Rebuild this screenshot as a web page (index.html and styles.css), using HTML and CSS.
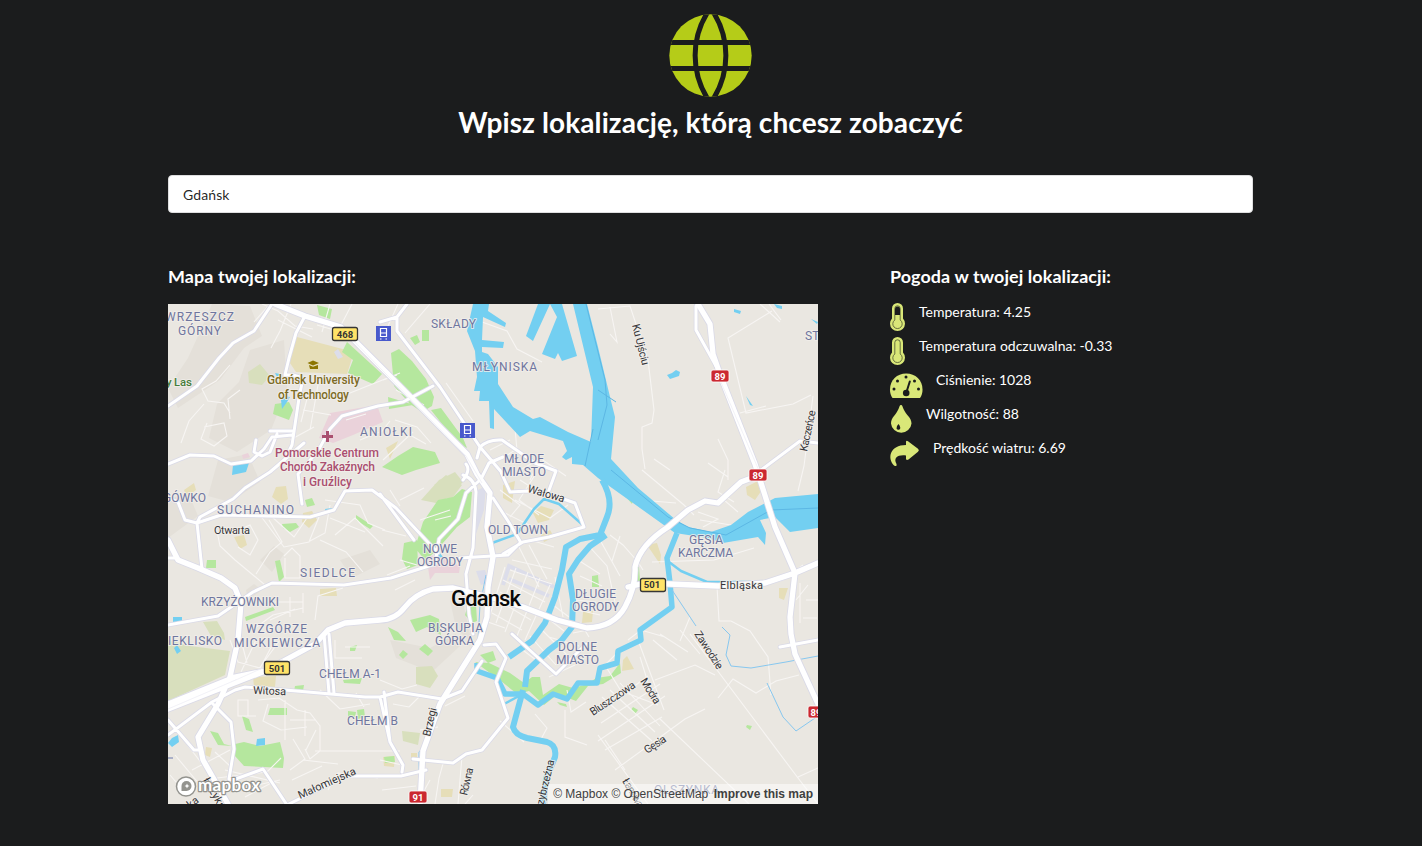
FILE: index.html
```html
<!DOCTYPE html>
<html lang="pl">
<head>
<meta charset="utf-8">
<title>Mapa i pogoda</title>
<link rel="stylesheet" href="styles.css">
</head>
<body>
<main class="page">
  <header class="header">
    <svg class="globe" viewBox="0 0 83 83">
      <defs><clipPath id="disc"><circle cx="41.5" cy="41.5" r="41.200"/></clipPath></defs>
      <g clip-path="url(#disc)">
        <rect width="83" height="83" class="globe-fill"/>
        <path class="globe-line" d="M40 -4C21.500 24 21.500 59 40 87M43 -4C61.500 24 61.500 59 43 87M0 28.500H83M0 54.500H83"/>
      </g>
    </svg>
    <h1>Wpisz lokalizację, którą chcesz zobaczyć</h1>
  </header>
  <input class="search" type="text" value="Gdańsk" aria-label="Lokalizacja">
  <div class="columns">
    <section class="map-column">
      <h3>Mapa twojej lokalizacji:</h3>
      <div class="map">
        <svg class="map-canvas" viewBox="168 304 650 500">
          <defs>
            <path id="mid-roads" d="M168 406l29-20 22-28 14-15 21-12 18-27M305 316l-9 17-7 25-4 17 8 0 10 3-4 20-7 47-9 18M168 464l22-9 24 1 17 8 20-3 13-12 8-12 20-2M256 440l-2 12 8 4 8-4 7-18M270 431l23 0M168 498l10 4 7 18 12 3 3-6 33-18 12-11 25-16 34-29M197 523l24-8 89 2 24-7 11-19 27-1 24 18 42 45M302 504l-4-30 20-23 12-22 12-13 36-10 25-4 30-16M197 523l5 46M168 625l50-9 35-24 19-9 72 2 47-7 44-14 4-25 19-20 8-26 15-14 8-16 14-6M463 475q12 4 13 17l-3 56-7 26 3 40 4 20M407 304l-10 13 0 14 43 56 40 60 23 27M463 480q8-10 3-16M477 458l3-11q8-8 22-7l33 23 21 8-8 22M500 470l10 22 18-1 18 2 29 10 9 24-35 10-26 5-20 12M380 494l34 46M493 498l15 23 12 20M460 558l48-3M508 555l12-12M484 645l12-1 10 14-10 24 12 36-26 32-16 4-13 9-40-4M512 634l44 40 30-30M168 735l44-33 23-12 10-3 40 3 80 7 15 0 18-5 44 7 20-8 20-30M168 720l26 30 4 0M213 704l18 18 3 27-5 30 4 1 30-11 24 36 58-29 56 0 25-6M380 697l10 45 13 23-1 7M324 634l5 59M329 634l5 59M384 692l6 50M757 473l43-32 18 2M380 322l17-5M696 306l0 24 25 45M780 647l38-7M168 558h10"/>
            <path id="major-roads" d="M168 540L178 560 198 568 221 578 235 588 241 603 238 640 230 677 218 704 198 737 203 760 228 804M275 304L305 316 341 327 388 374 467 454 477 474 490 493 487 527 493 557 488 587 487 617 480 640 463 667 440 704 423 751 420 804M168 709L265 671 315 644 328 630 345 623 380 620Q395 620 405 607T433 589L453 588 493 598 523 607 557 620 587 628Q614 627 625 607T635 567Q640 545 668 527L688 510 705 501 718 503 741 482 757 476M628 587L645 583 718 586 765 583 795 573 818 563M698 304L710 324 713 354 721 377 755 464 775 527 795 573 790 617 791 634 795 654 818 704M168 704L235 677 265 671"/>
          </defs>
          <g class="urban">
            <path d="M212 304l38 2 12 30-18 12-24 32-42 28-10-20 20-30 10-22zM250 350l34-10 3 50-16 40-34 22-28-14 8-34 22-22zM218 460l30-6 12 28-30 20-22-6zM168 500l20-8 10 24-30 22zM260 560l14-14 10 8-12 18zM390 640l40 8 26-14 4 12-28 26-36-14zM246 590l8-6 8 6-14 10zM340 560l30-10 10 14-28 14zM450 600l14 6 8 38-16-16z"/>
          </g>
          <g class="forest">
            <path d="M168 640l22 6 40 5-5 24-57 26zM248 372l12-8 10 12-8 9-13-2zM203 622l14-1 7 12 1 7-14-4zM416 667l16-1 6 10-8 12-14-4zM402 731l18 2-2 12-15-4zM421 500l18-20 16-8 8 10-22 22zM434 485l12-10 16 10-12 16z"/>
          </g>
          <g class="sand">
            <path d="M297 337l57 15-7 22-51-2-8-12zM386 448l12-7-8 18zM746 487l14-7 4 7-9 13-8-5zM647 545l10-2 4 12-1 9zM779 588l9 0-4 12-5-2zM583 612l10-1-1 11-10 1zM533 513l8-7 13 4-5 10-11 3zM503 485l12-4-3 22-9-5zM623 660l4-4 7 13-12 2zM303 513l9-2 5 9-8 8-7-6zM276 487l10-1 2 13-7 5-9-7zM253 677l23-1-1 11-21 0zM320 589l16-1 1 8-17 0zM383 757l12-1-1 11-10-1zM441 789l12 0-1 8-11 0zM184 490l10-7 2 7-9 7zM411 753l6 0 0 8-6 0zM234 537l10-2 3 10-7 4zM206 747l6 1-2 9-5-2zM541 535l9-5 4 7-10 5z"/>
          </g>
          <g class="hospital">
            <path d="M330 413l47-8 6 17-30 13-20 8-14-5zM426 555l14 2 20 9-1 7-24 0-5 7zM242 455l6-2 2 4-7 2z"/>
          </g>
          <g class="park">
            <path d="M347 342l35 32-9 10-25-11 5-13-11-8zM317 305l15 4-2 10-11-4zM275 404l14-2 4 8-4 10-16-6zM391 353l8-4 13 12 14 18 8 18-2 9-10 6-12-8-16-18zM388 397l20 6 5 2-24 4zM431 410l10-2 22 30 4 10-10-5zM410 338l7-3 3 7-5 3zM422 330h7v11h-7zM398 456l15-9 22 5 5 11-24 7-14 5-20-8zM462 489l10 3-2 25-13 10-22 25-10 8-10-12 8-26 15-22 15-3zM404 543l13-3 1 25-11 4-5-10zM475 662l14 1 21 10 14 10 8-6 8 0 3 18 16-11 14 4 15-4 8-6 14-2 10-13 1 10-18 11-15 2-12 15-18-7-14 11-15-14-12 3-16-13zM235 744l9-2 16 4 20-4 4 16-1 10-39-2-9-10zM242 716l7 3 4 13-7-2zM210 731l8 2 6 11 8 2-14-1zM270 708h17v7h-19zM357 710l7-1 1 8-7 2zM207 560h9v8h-10zM275 561l5-1 4 17-5 5zM282 524l14-1 3 4-9 5-7-4zM245 617l28-10 2 3-29 11zM634 569l5-2 1 14-5 5zM592 576l6-1 1 12-7 0zM627 493l7 2-2 9-6-7zM356 515l17 11-3 3-14-9zM305 500l7-2 3 7-8 2zM295 686l9-1-1 6-9 0zM467 608l9-3 1 16-5 2-7-8zM410 620l20-5 9 4 2 16-14-8-11 5zM388 627l10 5 8 9-12-1zM343 680l19-2-2 6-16-1zM419 649l6-5 8 7-5 5zM403 650l5 4-5 5-4-4zM633 707l5 3-3 4-4-4zM747 725l5 1-2 4-4-3zM384 757l10-1 1 6-10 1zM480 655l13-4 3 9-8 3zM557 702l9 2 1 3-7-2zM348 711l8 1-1 5-7 0zM350 647l7-2-2 6-5 0z"/>
          </g>
          <g class="rail-area"><path d="M478 490l8-4-2 24-8 24zM476 571l9-1 4 12-8 3zM334 352l4-3 5 8-5 2z"/><path class="campus" d="M503 585l6-19 45 21M509 579l40 17"/></g>
          <g class="streets">
            <path d="M270 304l-16 18M262 304l16 7 17 15 18 3M278 320l34 17M291 304l-11 27-9 17M317 325l34 10M330 304l-8 28M352 304l-12 23M230 365l-14 16-14 8 6 12 16 2 6 10M240 390l-12 9 2 20M204 427l20-4 3 13-13 10-13-7 6-16M181 443l8-22 15-17M308 395l-7 27M318 385l-8 45M303 410l28 5M340 397l30-12 30-12M396 390l28 15M346 420l20-6M360 440l22-9 8-10M383 460l30-28M395 420l22 7 14 16M410 435l16 9M290 440l24-13M330 505l-5 28-15 8M230 534l20-9 8 15-8 15-12-8M216 526l4 20 15 14M269 520l13 22-12 10-14 22M260 515l24 32 25-5 10-25M270 515l24 22 15-22M284 556l8-8 8 8v22h-15v-20M235 560l30 25 20-2M320 540l26 12 17 20M335 535l20-17 28 28M330 518l35 14M325 500l35 5 8 18 17 7M270 620l25-11M255 628l18-13 30-7M290 617v-20M303 613v-20M275 602h28M315 620l3-24 25-8M230 640l8 22 36 10M240 636l7 27M256 640l-15 32M275 640l-16 30M280 640l-22 30M248 716v-16h-10v16h18M258 700l21-2 18 12 13 3 10 13v25l-10 8-5-10M268 704l-5 17 18 9 26-3M285 700v40M305 710v26M290 720h26M316 730l-10 20M315 751h85M175 755l25 30M186 743l27 35M170 775l17 20M192 770l38-20M215 752l15 14M217 778l50-6 14-14M225 770l55 13M235 790l45-10M245 797l30-16M290 770l15-11-12-20M303 760l35 4M292 780l30-14M328 790l10-17 40 5M335 640v18h27M345 647h25M320 690l20 19 30-5M356 693l8 14M380 680l22 9 15-4M393 704l16 3 10-10"/>
            <path d="M383 380l14-5M398 304l-10 22-8 13M430 304l-25 29M482 322l25 9 10 18 25 13M446 383l27 38M515 428l2 23M490 450l20-10M500 460l15-10M520 470l18-10M530 480l10-22 26 18M400 500l24-12M390 490l10 16M420 520l30-10M382 530l24 6M387 575l23-9M395 590l20-10M400 560l17 5M435 520l16-4M500 490l20 15-10 12M520 480l28 18M535 475l-16 25 20 15M515 500l35 18 18-13M505 513l30 15M530 540l24 7M519 547l20 40M529 545l18 34M512 560l40 9M510 570l42 14M503 580l42 22M500 592l37 22M497 600l34 20M492 613l30 17M485 621l20 7M505 567l-15 48M516 568l-20 55M528 572l-23 60M540 578l-23 58M550 585l-25 55M578 560l22 14M580 576l22 10M587 544l20 22 8 36M576 600l20 2M578 610l22 5M573 633l25-5M580 622l9 15M555 577l8 40M553 605l16 12M550 620l14 11M520 648l20 15M530 636l26 29M540 628l28 28M549 637l30 9M549 677l26-12M567 690l4 22 15-10M620 650l-15 15 16 26 37 14M602 697l50 44M610 690l45 42M620 683l40 43M595 715l53-39M601 723l59-39M598 741l67-45M605 750l57-33M615 770l70-51 20-10M638 640l26 70M659 718l90 86M605 740l20 30M598 735l50 69M500 721l24 21M535 714l12 14-7 13M565 710v27l22 8"/>
            <path d="M598 309l32-3 18 54 6 50-2 13-10 4v22l3 20M610 307l7 35-7-8M769 304l12 16M772 311l-44 27 18 75 47-9 18-9M740 413l26-7M813 396l-9 70-6 25M760 304l20 18M642 470l42 35 10 10M640 500l36 3M725 470l-7 22 16 10M698 512l20 7-15 8M700 520l31 5M724 500l14 12M610 535l13 10 15 17 5 8M652 562l62-2 40-12M600 540l20 36M620 536l-8 25M717 586l2 35h12l19 10 18 26 3 38M800 583v40M806 600h12M803 618h14M718 698l15-19 23 14 20-12 23-6M680 630l20 24M653 640l24 20M640 657l14 45M655 680l40-15 20 10M690 617l-10 24M660 634l28 18M628 640l13-10 24 7M748 590l35-10 20-15M718 439l10 21v20M708 463l20 14M670 470l-16-11M808 585l-12 15M690 634l108 144 20 26M798 777l20-9M445 706l20-10M420 730l18-3M430 780l-11 20M444 760l-5 18-4 26M473 795l-8 9M462 756l-4 48M380 760l22 5M382 790l34-4"/>
          </g>
          <g class="water">
            <path d="M473 304L467 331 475 351 477 377 474 391 480 391 479 401 489 401 490 428 494 429 494 409 520 437 530 431 563 441 567 451 562 457 566 460 572 457 572 464 583 465 598 478 675 533 708 538 723 543 758 537 765 545 766 533 760 520 775 517 790 532 818 528V494L775 498 748 512 731 525 711 532 688 527 676 520 638 488 611 459 615 417 611 401 598 347 587 304H573L593 387 591 442 568 432 540 417 533 419 513 407 498 384 498 367 488 354 482 352V347L503 348 504 342 482 340 483 317 505 327 506 323 488 311 489 304ZM538 304L526 336 533 341 550 304 557 317 542 354 555 359 558 353 562 361 577 356 562 304ZM667 375l5-2 4-3 4 2-1 4-9 3zM734 309l7 2-1 3-6-2zM774 304l8 2 0 3-5-1zM811 319l7 3-1 2zM746 396l7 10-3-1zM281 400l4-4 5 1-3 5-5 7zM233 465l16-2-3 9-14 3zM173 617h9v6h-9zM174 648l3-3 4 6-4 3zM172 738l6-3 1 7-7 5-4-4zM257 739l8-1v7l-9 1zM275 373l5 1-3 3zM325 509l7-1 1 3-7 1zM439 552l4 5-5 1z"/>
            <path class="channel" stroke-width="6" d="M602 480Q614 500 607 517L600 535 580 539 566 547 562 570 555 597 545 623 532 641 509 657"/>
            <path class="channel" stroke-width="6" d="M606 535L590 546 578 560 569 574 573 600 572 627 561 641 549 650 527 671 525 687"/>
            <path class="channel" stroke-width="5.5" d="M677 533L667 558 670 583 672 607 640 630 641 640 618 651 617 663 600 668 597 683 578 683 567 699 553 694 538 705 523 694 505 694 497 678 477 671V663"/>
            <path class="channel" stroke-width="6" d="M523 690L513 727Q515 735 527 738L547 742Q557 745 555 757L546 779 543 804"/>
            <path class="channel" stroke-width="2.500" d="M669 562l12 9 26 11M492 543l25-9 17-25 10-10 15 5 25 22M504 704l15-8M707 582l50 0"/>
            <path class="creek" d="M672 590l24 36M722 627l8 8-4 20 5 11 20 2 35-6 32-6M767 683l16 34 13 14 22-15M419 770v-18l6-7M486 575l-6 30-2 35"/>
          </g>
          <path class="water-edge" d="M598 440l9-35-2-25-19-76M598 390l18 12M611 470l57 47 22 11 36 7 45-25 47-2M585 466l8-37"/>
          <g class="roads">
            <use href="#mid-roads" class="mid casing"/><use href="#major-roads" class="major casing"/>
            <use href="#mid-roads" class="mid fill"/><use href="#major-roads" class="major fill"/>
          </g>
          <path class="road-divider" d="M168 709l70-30 45-20M343 330l123 126 16 27M720 380l43 100"/>
          <g class="area-label">
            <text x="165" y="321" textLength="69">WRZESZCZ</text><text x="178" y="335" textLength="43">GÓRNY</text>
            <text x="431" y="328" textLength="45">SKŁADY</text><text x="472" y="371" textLength="65">MŁYNISKA</text>
            <text x="360" y="436" textLength="52">ANIOŁKI</text><text x="504" y="463" textLength="40">MŁODE</text><text x="502" y="476" textLength="44">MIASTO</text>
            <text x="805" y="340">ST</text><text x="163" y="502" textLength="43">GÓWKO</text><text x="217" y="514" textLength="77">SUCHANINO</text>
            <text x="300" y="577" textLength="55">SIEDLCE</text><text x="201" y="606" textLength="78">KRZYŻOWNIKI</text><text x="246" y="633" textLength="61">WZGÓRZE</text><text x="234" y="647" textLength="86">MICKIEWICZA</text>
            <text x="168" y="645" textLength="54">IEKLISKO</text><text x="488" y="534" textLength="60">OLD TOWN</text><text x="423" y="553" textLength="34">NOWE</text><text x="417" y="566" textLength="46">OGRODY</text>
            <text x="689" y="544" textLength="34">GĘSIA</text><text x="678" y="557" textLength="55">KARCZMA</text><text x="575" y="598" textLength="41">DŁUGIE</text><text x="572" y="611" textLength="47">OGRODY</text>
            <text x="428" y="632" textLength="55">BISKUPIA</text><text x="435" y="645" textLength="39">GÓRKA</text><text x="558" y="651" textLength="39">DOLNE</text><text x="556" y="664" textLength="43">MIASTO</text>
            <text x="319" y="678" textLength="62">CHEŁM A-1</text><text x="347" y="725" textLength="51">CHEŁM B</text><text x="654" y="794" textLength="65">OLSZYNKA</text>
          </g>
          <g class="street-label">
            <text x="214" y="534" textLength="36">Otwarta</text><text transform="translate(527 492) rotate(16)" textLength="38">Wałowa</text>
            <text transform="translate(632 325) rotate(76)" textLength="42">Ku Ujściu</text><text transform="translate(807 452) rotate(-78)" textLength="42">Kaczeńce</text>
            <text x="720" y="589" textLength="43">Elbląska</text><text transform="translate(694 634) rotate(57)" textLength="43">Zawodzie</text>
            <text transform="translate(593 716) rotate(-34)" textLength="52">Bluszczowa</text><text transform="translate(640 681) rotate(58)" textLength="28">Modra</text>
            <text transform="translate(647 754) rotate(-33)" textLength="24">Gęsia</text><text transform="translate(622 781) rotate(60)" textLength="32">Łanowa</text>
            <text transform="translate(253 694) rotate(2)" textLength="33">Witosa</text><text transform="translate(430 737) rotate(-77)" textLength="29">Brzegi</text>
            <text transform="translate(467 796) rotate(-77)" textLength="28">Równa</text><text transform="translate(300 799) rotate(-24)" textLength="62">Małomiejska</text>
            <text transform="translate(541 815) rotate(-76)" textLength="56">Przybrzeźna</text><text transform="translate(203 780) rotate(61)" textLength="34">Łużyka</text><text transform="translate(186 812) rotate(-37)">zka</text>
          </g>
          <g class="uni"><text x="267" y="384" textLength="93">Gdańsk University</text><text x="278" y="399" textLength="71">of Technology</text><path d="M307.500 363l5.500-2.500 6 2.500-6 2.500zM309 365l4 1.800 5-1.800v4h-8z"/></g>
          <g class="clinic"><text x="275" y="457" textLength="104">Pomorskie Centrum</text><text x="280" y="471" textLength="95">Chorób Zakaźnych</text><text x="303" y="486" textLength="49">i Gruźlicy</text><path d="M326 431h3v4h4v3h-4v4h-3v-4h-4v-3h4z"/></g>
          <text class="wood" x="166" y="386" textLength="26">y Las</text>
          <text class="city" x="451" y="606" textLength="70">Gdansk</text>
          <g class="yellow-shield">
            <rect x="332.5" y="327.5" width="25" height="13" rx="2"/><text x="345" y="338">468</text>
            <rect x="640.5" y="578.5" width="25" height="13" rx="2"/><text x="652" y="588">501</text>
            <rect x="264.5" y="661.5" width="25" height="13" rx="2"/><text x="277" y="672">501</text>
          </g>
          <g class="red-shield">
            <rect x="711" y="370" width="18" height="12" rx="2"/><text x="720" y="380">89</text>
            <rect x="749" y="469" width="18" height="12" rx="2"/><text x="758" y="479">89</text>
            <rect x="808" y="706" width="18" height="12" rx="2"/><text x="816" y="716">89</text>
            <rect x="409" y="791" width="18" height="12" rx="2"/><text x="418" y="801">91</text>
          </g>
          <g id="station"><path class="station-bg" d="M376 326h15v15h-15z"/><path class="station-mark" d="M380.500 328.500h6v8h-6zM380.500 333h6M380 339h1.500M385.500 339h1.500"/></g>
          <use href="#station" x="84" y="97"/>
          <path class="creek-dark" d="M168 758h5"/>
          <g class="logo">
            <circle cx="186" cy="786.5" r="9.500"/><path d="M181.500 791v-5a5 5 0 1 1 5 5z"/><path class="star" d="M187 783.500l.8 1.700 1.700.8-1.700.8-.8 1.700-.8-1.700-1.700-.8 1.700-.8z"/>
            <text x="198" y="791" textLength="62">mapbox</text>
          </g>
        </svg>
        <div class="attribution"><span>© Mapbox</span> <span class="osm">© OpenStreetMap</span> <b>Improve this map</b></div>
      </div>
    </section>
    <section class="weather">
      <h3>Pogoda w twojej lokalizacji:</h3>
      <ul>
        <li><svg width="15" height="29" viewBox="0 0 15 29"><path d="M2 5.500a5.500 5.500 0 0 1 11 0V15.500a7.500 7.500 0 1 1-11 0z"/><path class="cut-line" d="M4.800 17V5.500a2.700 2.700 0 0 1 5.400 0V17a4.700 4.700 0 1 1-5.400 0z"/><path class="cut" d="M5 12V6a2.500 2.500 0 0 1 5 0v6z"/></svg><span>Temperatura: 4.25</span></li>
        <li><svg width="15" height="29" viewBox="0 0 15 29"><path d="M2 5.500a5.500 5.500 0 0 1 11 0V15.500a7.500 7.500 0 1 1-11 0z"/><path class="cut-line" d="M4.800 17V5.500a2.700 2.700 0 0 1 5.400 0V17a4.700 4.700 0 1 1-5.400 0z"/></svg><span>Temperatura odczuwalna: -0.33</span></li>
        <li><svg width="32" height="29" viewBox="0 0 32 29"><path d="M2.500 27Q0 24 0 18.500C0 9 7 2.500 16.200 2.500S32.500 9 32.500 18.500Q32.500 24 30 27z"/><g class="cut"><circle cx="16" cy="6" r="1.500"/><circle cx="7.500" cy="10" r="1.500"/><circle cx="24.500" cy="10" r="1.500"/><circle cx="4" cy="18" r="1.500"/><circle cx="28.500" cy="18" r="1.500"/><circle cx="16.200" cy="22" r="3.300"/></g><path class="pointer" d="M16.500 21L19.800 10.500"/></svg><span>Ciśnienie: 1028</span></li>
        <li><svg width="22" height="29" viewBox="0 0 22 29"><path d="M11 0C12.500 0 12.500 2 13.500 4C16 10 21.500 12.500 21.500 18.500A10.300 10.200 0 0 1 1 18.500C1 12.500 6 10 8.500 4C9.500 2 9.500 0 11 0z"/><path class="cut" d="M8.500 19q3 4 1 5.500-2 1-3-1-.5-2 2-4.500z"/></svg><span>Wilgotność: 88</span></li>
        <li><svg width="29" height="29" viewBox="0 0 29 29"><path d="M16 2.500q.5-1.300 2-.3L28 9.800q1.800 1.500 0 2.900L18.500 20.500q-2 1-2.500-.5V16.500C8 15.500 3 18.500 6.500 25Q7.500 28 4 26.500C-3 19 0 6 16 6z"/></svg><span>Prędkość wiatru: 6.69</span></li>
      </ul>
    </section>
  </div>
</main>
</body>
</html>
```
FILE: styles.css
```css
* { box-sizing: border-box; }
body { margin: 0; background: #1b1c1d; color: #fff; font: 14px/20px Lato, sans-serif; overflow: hidden; }
.page { width: 1085px; height: 846px; margin-left: 168px; padding-top: 14px; }
.header { display: flex; flex-direction: column; align-items: center; }
.globe { width: 83px; height: 83px; }
.globe-fill { fill: #b5cc18; }
.globe-line { fill: none; stroke: #1b1c1d; stroke-width: 5; }
h1 { margin: 7px 0 0; font-size: 28px; line-height: 36px; font-weight: 700; letter-spacing: .1px; white-space: nowrap; }
h3 { margin: 0; font-size: 17.92px; line-height: 23px; font-weight: 700; letter-spacing: .1px; white-space: nowrap; }
.search { display: block; width: 100%; height: 38px; margin-top: 35px; padding: 9px 14px; border: 1px solid #dededf; border-radius: 4px; background: #fff; color: rgba(0, 0, 0, .87); font: 14px/17px Lato, sans-serif; letter-spacing: .1px; outline: none; }
.columns { display: grid; grid-template-columns: 650px 1fr; column-gap: 72px; margin-top: 52px; }
.map { position: relative; width: 650px; height: 500px; margin-top: 16px; overflow: hidden; background: #eae7e1; }
.map-canvas { display: block; width: 650px; height: 500px; font-family: Roboto, sans-serif; }
.urban { fill: #e4e0d9; }
.forest { fill: #d8dfbd; }
.sand { fill: #e6deb8; }
.hospital { fill: #ead2da; }
.park { fill: #b5e79e; }
.rail-area { fill: #dcddea; }
.campus { fill: none; stroke: #dcddea; stroke-width: 4; }
.streets { fill: none; stroke: #f7f5f3; stroke-width: 1.100; }
.water { fill: #73cff1; }
.channel { fill: none; stroke: #73cff1; stroke-linejoin: round; }
.creek, .water-edge { fill: none; stroke: #87c7ef; stroke-width: 1; }
.water-edge { stroke: #5cb7e4; }
.creek-dark { stroke: #6b78ad; }
.roads { fill: none; stroke-linejoin: round; stroke-linecap: round; }
.casing { stroke: #dadae7; }
.fill { stroke: #fff; }
.mid.casing { stroke-width: 4.600; }
.mid.fill { stroke-width: 3; }
.major.casing { stroke-width: 7; }
.major.fill { stroke-width: 5.300; }
.road-divider { fill: none; stroke: #ececf3; stroke-width: .7; }
.map-canvas text { paint-order: stroke; stroke: #f2efebcc; stroke-width: 2px; stroke-linejoin: round; }
.area-label { fill: #6f769f; font-size: 12px; font-weight: 400; }
.street-label { fill: #36363a; font-size: 11px; }
.uni { fill: #7d6b25; font-size: 12px; font-weight: 500; }
.uni path { fill: #8c7500; }
.clinic { fill: #aa4f70; font-size: 12px; font-weight: 500; }
.wood { fill: #467d3b; font-size: 11.500px; font-weight: 500; }
.city { fill: #080808; font-size: 22px; font-weight: 500; }
.yellow-shield rect { fill: #ffe368; stroke: #363636; stroke-width: 1.300; }
.map-canvas .yellow-shield text, .map-canvas .red-shield text { stroke: none; text-anchor: middle; font-size: 9.500px; font-weight: 700; }
.yellow-shield text { fill: #333; }
.red-shield rect { fill: #cb2830; stroke: #fff; stroke-width: .8; }
.red-shield text { fill: #fff; }
.station-bg { fill: #4859cc; }
.station-mark { fill: none; stroke: #fff; stroke-width: 1.200; }
.logo circle { fill: #fff; stroke: #94948f; stroke-width: 1.500; }
.logo path { fill: #94948f; }
.logo .star { fill: #fff; }
.map-canvas .logo text { fill: #fff; stroke: #94948f; stroke-width: 2.500px; font: 700 17px Lato, sans-serif; }
.attribution { position: absolute; right: 0; bottom: 0; height: 20px; padding: 0 5px; background: rgba(255, 255, 255, .5); color: #404040; font: 12px/20px "Liberation Sans", sans-serif; white-space: nowrap; }
.osm { margin-right: 2px; }
.weather ul { margin: 14px 0 0; padding: 0; list-style: none; }
.weather li { display: flex; align-items: flex-start; height: 34px; }
.weather li svg { flex: none; fill: #d9e778; margin: 1px 0 0 -.5px; overflow: visible; }
.weather li span { margin-left: 14.500px; line-height: 20px; white-space: nowrap; }
.weather .cut { fill: #1b1c1d; }
.cut-line { fill: none; stroke: #4a5030; stroke-width: .8; }
.pointer { fill: none; stroke: #1b1c1d; stroke-width: 2; stroke-linecap: round; }
```
